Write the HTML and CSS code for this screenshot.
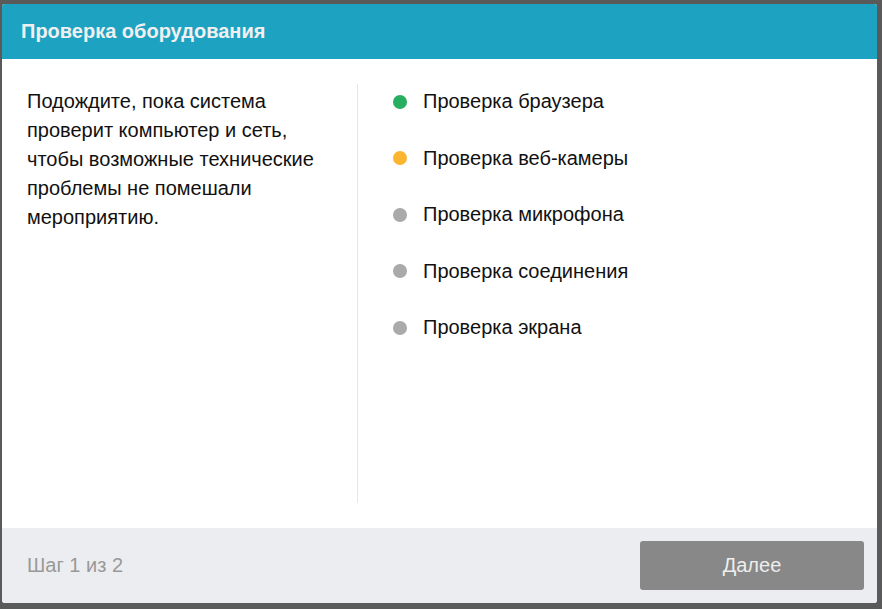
FILE: index.html
```html
<!DOCTYPE html>
<html lang="ru">
<head>
    <meta charset="UTF-8">
    <title>Проверка оборудования</title>
    <link rel="stylesheet" href="styles.css">
</head>
<body>

<div class="dialog">
    <div class="dialog-header">Проверка оборудования</div>

    <div class="dialog-body">
        <div class="intro">
            Подождите, пока система проверит компьютер и сеть, чтобы возможные технические проблемы не помешали мероприятию.
        </div>

        <ul class="checks">
            <li class="check"><span class="dot dot-ok"></span>Проверка браузера</li>
            <li class="check"><span class="dot dot-progress"></span>Проверка веб-камеры</li>
            <li class="check"><span class="dot"></span>Проверка микрофона</li>
            <li class="check"><span class="dot"></span>Проверка соединения</li>
            <li class="check"><span class="dot"></span>Проверка экрана</li>
        </ul>
    </div>

    <div class="dialog-footer">
        <div class="step">Шаг 1 из 2</div>
        <button class="button" disabled>Далее</button>
    </div>
</div>

</body>
</html>
```

FILE: styles.css
```css
body {
    margin: 0;
    padding: 4px 0 0 2px;
    background: #5a5a5a;
    font-family: 'Liberation Sans', Arial, sans-serif;
    height: 609px;
    box-sizing: border-box;
    overflow: hidden;
}

.dialog {
    width: 875px;
    height: 599px;
    display: flex;
    flex-direction: column;
    background: #fff;
    border-radius: 3px;
    overflow: hidden;
}

.dialog-header {
    height: 55px;
    flex-shrink: 0;
    display: flex;
    align-items: center;
    padding-left: 19px;
    background: #1ea2c1;
    color: #f0f0f0;
    font-size: 20px;
    font-weight: bold;
}

.dialog-body {
    flex: 1;
    display: flex;
}

.intro {
    width: 305px;
    margin: 25px 0;
    padding: 3px 25px 0 25px;
    border-right: 1px solid #e6e6e6;
    font-size: 20px;
    line-height: 29px;
    color: #111;
}

.checks {
    list-style: none;
    margin: 0;
    padding: 28px 0 0 35px;
}

.check {
    display: flex;
    align-items: center;
    height: 29px;
    margin-bottom: 27.5px;
    font-size: 20px;
    color: #111;
}

.dot {
    width: 14px;
    height: 14px;
    border-radius: 50%;
    background: #aaa;
    margin-right: 16px;
    flex-shrink: 0;
}

.dot-ok {
    background: #27ae60;
}

.dot-progress {
    background: #fcb52e;
}

.dialog-footer {
    height: 75px;
    flex-shrink: 0;
    display: flex;
    align-items: center;
    justify-content: space-between;
    padding: 0 13px 0 25px;
    background: #ecedf0;
}

.step {
    font-size: 20px;
    color: #999;
}

.button {
    width: 224px;
    height: 49px;
    border: none;
    border-radius: 3px;
    background: #888;
    color: #eee;
    font-family: inherit;
    font-size: 20px;
}
```
